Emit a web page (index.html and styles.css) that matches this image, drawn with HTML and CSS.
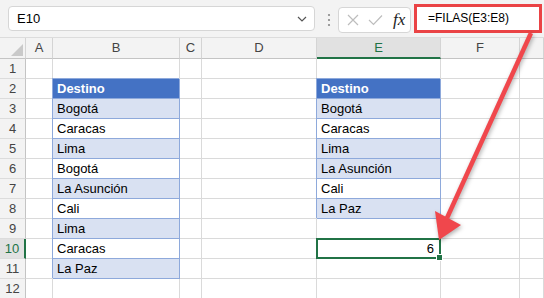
FILE: index.html
```html
<!DOCTYPE html>
<html lang="es">
<head>
    <meta charset="UTF-8">
    <title>FILAS</title>
    <link rel="stylesheet" href="styles.css">
</head>
<body>
    <div class="formula-bar">
        <div class="name-box">
            <span>E10</span>
            <svg class="chevron" width="10" height="6" viewBox="0 0 10 6"><path d="M1 1l4 4 4-4" fill="none" stroke="#555" stroke-width="1.2"/></svg>
        </div>
        <svg class="dots" width="4" height="14" viewBox="0 0 4 14">
            <circle cx="2" cy="2" r="1.1" fill="#888"/>
            <circle cx="2" cy="7" r="1.1" fill="#888"/>
            <circle cx="2" cy="12" r="1.1" fill="#888"/>
        </svg>
        <div class="fx-box">
            <svg width="12" height="12" viewBox="0 0 12 12"><path d="M1 1l10 10M11 1L1 11" stroke="#bdbdbd" stroke-width="1.2"/></svg>
            <svg width="15" height="12" viewBox="0 0 15 12"><path d="M1 6l4.5 4.5L14 1.5" fill="none" stroke="#bdbdbd" stroke-width="1.2"/></svg>
            <span class="fx">fx</span>
        </div>
        <div class="formula-input">=FILAS(E3:E8)</div>
    </div>

    <div class="sheet">
        <div class="corner"><svg width="26" height="21" viewBox="0 0 26 21"><path d="M11 18h12V6z" fill="#c9c9c9"/></svg></div>
        <div class="ch">A</div><div class="ch">B</div><div class="ch">C</div><div class="ch">D</div><div class="ch on">E</div><div class="ch">F</div><div class="ch"></div>

        <div class="rh">1</div><div class="c"></div><div class="c"></div><div class="c"></div><div class="c"></div><div class="c"></div><div class="c"></div><div class="c"></div>
        <div class="rh">2</div><div class="c"></div><div class="c t th">Destino</div><div class="c"></div><div class="c"></div><div class="c t th">Destino</div><div class="c"></div><div class="c"></div>
        <div class="rh">3</div><div class="c"></div><div class="c t band">Bogotá</div><div class="c"></div><div class="c"></div><div class="c t band">Bogotá</div><div class="c"></div><div class="c"></div>
        <div class="rh">4</div><div class="c"></div><div class="c t">Caracas</div><div class="c"></div><div class="c"></div><div class="c t">Caracas</div><div class="c"></div><div class="c"></div>
        <div class="rh">5</div><div class="c"></div><div class="c t band">Lima</div><div class="c"></div><div class="c"></div><div class="c t band">Lima</div><div class="c"></div><div class="c"></div>
        <div class="rh">6</div><div class="c"></div><div class="c t">Bogotá</div><div class="c"></div><div class="c"></div><div class="c t band">La Asunción</div><div class="c"></div><div class="c"></div>
        <div class="rh">7</div><div class="c"></div><div class="c t band">La Asunción</div><div class="c"></div><div class="c"></div><div class="c t">Cali</div><div class="c"></div><div class="c"></div>
        <div class="rh">8</div><div class="c"></div><div class="c t">Cali</div><div class="c"></div><div class="c"></div><div class="c t band">La Paz</div><div class="c"></div><div class="c"></div>
        <div class="rh">9</div><div class="c"></div><div class="c t band">Lima</div><div class="c"></div><div class="c"></div><div class="c"></div><div class="c"></div><div class="c"></div>
        <div class="rh on">10</div><div class="c"></div><div class="c t">Caracas</div><div class="c"></div><div class="c"></div><div class="c num sel">6</div><div class="c"></div><div class="c"></div>
        <div class="rh">11</div><div class="c"></div><div class="c t band">La Paz</div><div class="c"></div><div class="c"></div><div class="c"></div><div class="c"></div><div class="c"></div>
        <div class="rh">12</div><div class="c"></div><div class="c"></div><div class="c"></div><div class="c"></div><div class="c"></div><div class="c"></div><div class="c"></div>
    </div>

    <svg class="arrow" width="544" height="298" viewBox="0 0 544 298">
        <line x1="531" y1="33" x2="447" y2="218" stroke="#f0474c" stroke-width="4.5"/>
        <polygon points="435,211 461,225 439,240" fill="#f0474c"/>
    </svg>
</body>
</html>
```

FILE: styles.css
```css
body {
    margin: 0;
    background: #f3f3f3;
    font-family: "Liberation Sans", Arial, sans-serif;
    font-size: 13px;
    color: #000;
    position: relative;
    overflow: hidden;
}
.formula-bar {
    display: flex;
    align-items: flex-start;
    height: 38px;
    box-sizing: border-box;
    border-bottom: 1px solid #dcdcdc;
}
.name-box {
    display: flex;
    align-items: center;
    justify-content: space-between;
    box-sizing: border-box;
    margin: 6px 0 0 8px;
    width: 307px;
    height: 25px;
    padding: 0 7px 0 8px;
    background: #fff;
    border: 1px solid #d6d6d6;
    border-radius: 4px;
}
.dots {
    margin: 13px 0 0 12px;
}
.fx-box {
    display: flex;
    align-items: center;
    gap: 9px;
    box-sizing: border-box;
    margin: 7px 0 0 7px;
    width: 73px;
    height: 26px;
    padding: 0 0 0 8px;
    background: #fff;
    border: 1px solid #d6d6d6;
    border-radius: 4px;
}
.fx {
    font-family: "Liberation Serif", serif;
    font-style: italic;
    font-size: 17px;
    color: #222;
    margin-left: 1px;
}
.formula-input {
    box-sizing: border-box;
    margin: 4px 0 0 3px;
    width: 128px;
    height: 29px;
    padding: 0 0 0 11px;
    background: #fff;
    border: 3px solid #ea4345;
    font-size: 12px;
    line-height: 23px;
}
.sheet {
    display: grid;
    grid-template-columns: 26px 27px 127px 22px 115px 124px 79px 1fr;
    grid-template-rows: 21px repeat(12, 20px);
    background: #fff;
}
.corner, .ch, .rh {
    box-sizing: border-box;
    background: #f3f3f3;
    color: #444;
    text-align: center;
    border-right: 1px solid #d4d4d4;
    border-bottom: 1px solid #c4c4c4;
}
.corner svg {
    display: block;
}
.ch {
    line-height: 20px;
}
.ch.on {
    background: #e1e1e1;
    color: #217346;
    border-bottom: 2px solid #217346;
}
.rh {
    line-height: 19px;
    border-right-color: #c4c4c4;
    border-bottom-color: #dcdcdc;
}
.rh.on {
    background: #e1e1e1;
    color: #217346;
    border-right: 2px solid #217346;
}
.c {
    box-sizing: border-box;
    background: #fff;
    border-right: 1px solid #dadada;
    border-bottom: 1px solid #dadada;
    padding: 0 4px;
    line-height: 19px;
    white-space: nowrap;
    overflow: hidden;
}
.t {
    border-color: #8ea9db;
    box-shadow: -1px -1px 0 #8ea9db;
}
.band {
    background: #d9e1f2;
}
.th {
    background: #4472c4;
    color: #fff;
    font-weight: bold;
}
.num {
    text-align: right;
    padding-right: 6px;
}
.sel {
    position: relative;
    overflow: visible;
}
.sel::before {
    content: "";
    position: absolute;
    left: -1px;
    top: -1px;
    right: -1px;
    bottom: -1px;
    border: 2px solid #217346;
}
.sel::after {
    content: "";
    position: absolute;
    right: -3px;
    bottom: -3px;
    width: 5px;
    height: 5px;
    background: #217346;
    border: 1px solid #fff;
    z-index: 1;
}
.arrow {
    position: absolute;
    left: 0;
    top: 0;
    pointer-events: none;
    filter: drop-shadow(1px 2px 2px rgba(0, 0, 0, 0.3));
}
```
